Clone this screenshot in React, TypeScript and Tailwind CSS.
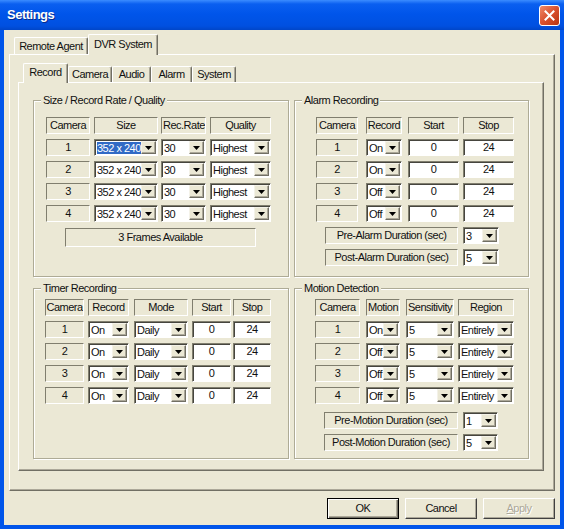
import type { ReactNode } from 'react'

const SUNKEN = 'border border-t-[#807e6e] border-l-[#807e6e] border-b-white border-r-white'

/**
 * Static text box with a sunken edge (column headers, camera numbers)
 */
function Static({ w, children }: { w: string; children: ReactNode }) {
  return (
    <div className={`${w} h-[17px] shrink-0 flex items-center justify-center overflow-hidden whitespace-nowrap leading-[15px] ${SUNKEN}`}>
      {children}
    </div>
  )
}

function DropArrow() {
  return (
    <div className="w-[15px] h-[13px] my-px mr-px shrink-0 flex items-center justify-center bg-[#ebe8d5] border border-t-[#f4f2e8] border-l-[#f4f2e8] border-b-[#716f64] border-r-[#716f64] shadow-[inset_-1px_-1px_0_#aca899]">
      <svg width="7" height="4" viewBox="0 0 7 4">
        <polygon points="0,0 7,0 3.5,4" fill="#000" />
      </svg>
    </div>
  )
}

/**
 * Drop down list with a white field and the arrow button
 */
function Combo({ w, value, selected }: { w: string; value: string; selected?: boolean }) {
  return (
    <div className={`${w} h-[17px] shrink-0 flex bg-white ${SUNKEN} shadow-[inset_1px_1px_0_#46453e]`}>
      <div className="flex-1 min-w-0 overflow-hidden whitespace-nowrap pl-[2px] pt-px leading-[14px]">
        <span className={selected ? 'bg-[#316ac5] text-white' : ''}>{value}</span>
      </div>
      <DropArrow />
    </div>
  )
}

function Edit({ w, value }: { w: string; value: string }) {
  return (
    <div className={`${w} h-[17px] shrink-0 flex items-center justify-center bg-white leading-[15px] ${SUNKEN} shadow-[inset_1px_1px_0_#46453e]`}>
      {value}
    </div>
  )
}

/**
 * Etched group box with its caption sitting on the top line
 */
function Group({ title, className, children }: { title: string; className: string; children: ReactNode }) {
  return (
    <div className={`relative border border-[#aeab96] shadow-[inset_1px_1px_0_#fff,1px_1px_0_#fff] ${className}`}>
      <span className="absolute -top-[8px] left-[7px] px-[2px] bg-[#ebe8d5] leading-[15px] whitespace-nowrap">{title}</span>
      {children}
    </div>
  )
}

function Tab({ label, w, active }: { label: string; w: string; active?: boolean }) {
  return (
    <div
      className={`${w} shrink-0 flex items-center justify-center rounded-t-[2px] border-t border-l border-t-white border-l-white border-r border-r-[#716f64] shadow-[inset_-1px_0_0_#aca899] bg-[#ebe8d5] whitespace-nowrap ${
        active ? 'relative z-10 -mb-px pb-[2px]' : ''
      }`}
    >
      {label}
    </div>
  )
}

const cams = ['1', '2', '3', '4']
const onOff = ['On', 'On', 'Off', 'Off']
const motion = ['On', 'Off', 'Off', 'Off']

export default function App() {
  return (
    <div className="w-[564px] h-[529px] flex flex-col overflow-hidden bg-[#0055ea] text-[11px] tracking-[-0.5px] text-[#111] font-['Liberation_Sans',Arial,sans-serif]">
      {/* Title bar */}
      <div className="h-[30px] shrink-0 flex items-center justify-between pl-[7px] pr-[4px] bg-[linear-gradient(#3b8cff_0px,#0a5ff0_4px,#0055ea_14px,#0050e0_26px,#0046c8_30px)]">
        <span className="text-white font-bold text-[13px] [text-shadow:1px_1px_0_#0a2a8a]">Settings</span>
        <div className="w-[21px] h-[21px] flex items-center justify-center rounded-[3px] border border-white bg-[linear-gradient(135deg,#f08a6a,#d8502e_50%,#b83410)]">
          <svg width="11" height="11" viewBox="0 0 11 11">
            <path d="M1.5 1.5 L9.5 9.5 M9.5 1.5 L1.5 9.5" stroke="#fff" strokeWidth="2" strokeLinecap="square" />
          </svg>
        </div>
      </div>

      {/* Window body */}
      <div className="flex-1 mx-[4px] mb-[4px] bg-[#ebe8d5] px-[5px] pt-[4px] flex flex-col">
        {/* Outer tabs */}
        <div className="h-[20px] pl-[5px] flex items-end">
          <Tab label="Remote Agent" w="w-[74px] h-[17px]" />
          <Tab label="DVR System" w="w-[70px] h-[21px]" active />
        </div>

        <div className="h-[437px] border border-t-white border-l-white border-b-[#716f64] border-r-[#716f64] shadow-[inset_-1px_-1px_0_#aca899] pl-[8px] pt-[8px]">
          {/* Inner tabs */}
          <div className="h-[19px] pl-[5px] flex items-end">
            <Tab label="Record" w="w-[45px] h-[20px]" active />
            <Tab label="Camera" w="w-[44px] h-[16px]" />
            <Tab label="Audio" w="w-[39px] h-[16px]" />
            <Tab label="Alarm" w="w-[41px] h-[16px]" />
            <Tab label="System" w="w-[44px] h-[16px]" />
          </div>

          <div className="w-[526px] h-[389px] border border-t-white border-l-white border-b-[#716f64] border-r-[#716f64] shadow-[inset_-1px_-1px_0_#aca899] pl-[14px] pt-[17px] flex flex-col gap-[11px]">
            <div className="flex gap-[5px]">
              {/* Size / Record Rate / Quality */}
              <Group title="Size / Record Rate / Quality" className="w-[256px] h-[177px] pl-[12px] pt-[16px] flex flex-col gap-[5px]">
                <div className="flex">
                  <Static w="w-[44px] mr-[4px]">Camera</Static>
                  <Static w="w-[64px] mr-[3px]">Size</Static>
                  <Static w="w-[45px] mr-[4px] !justify-start pl-px">Rec.Rate</Static>
                  <Static w="w-[61px]">Quality</Static>
                </div>
                {cams.map((c, i) => (
                  <div key={c} className="flex">
                    <Static w="w-[44px] mr-[4px]">{c}</Static>
                    <Combo w="w-[64px] mr-[3px]" value="352 x 240" selected={i === 0} />
                    <Combo w="w-[45px] mr-[4px]" value="30" />
                    <Combo w="w-[61px]" value="Highest" />
                  </div>
                ))}
                <div className="pl-[19px] pt-px">
                  <Static w="w-[191px] !h-[19px]">3 Frames Available</Static>
                </div>
              </Group>

              {/* Alarm Recording */}
              <Group title="Alarm Recording" className="w-[235px] h-[177px] pl-[21px] pt-[16px] flex flex-col gap-[5px]">
                <div className="flex">
                  <Static w="w-[42px] mr-[8px]">Camera</Static>
                  <Static w="w-[36px] mr-[6px]">Record</Static>
                  <Static w="w-[51px] mr-[4px]">Start</Static>
                  <Static w="w-[51px]">Stop</Static>
                </div>
                {cams.map((c, i) => (
                  <div key={c} className="flex">
                    <Static w="w-[42px] mr-[8px]">{c}</Static>
                    <Combo w="w-[36px] mr-[6px]" value={onOff[i]} />
                    <Edit w="w-[51px] mr-[4px]" value="0" />
                    <Edit w="w-[51px]" value="24" />
                  </div>
                ))}
                <div className="flex pl-[9px]">
                  <Static w="w-[133px] mr-[5px]">Pre-Alarm Duration (sec)</Static>
                  <Combo w="w-[36px]" value="3" />
                </div>
                <div className="flex pl-[9px]">
                  <Static w="w-[133px] mr-[5px]">Post-Alarm Duration (sec)</Static>
                  <Combo w="w-[36px]" value="5" />
                </div>
              </Group>
            </div>

            <div className="flex gap-[5px]">
              {/* Timer Recording */}
              <Group title="Timer Recording" className="w-[256px] h-[171px] pl-[11px] pt-[10px] flex flex-col gap-[5px]">
                <div className="flex">
                  <Static w="w-[39px] mr-[4px]">Camera</Static>
                  <Static w="w-[41px] mr-[5px]">Record</Static>
                  <Static w="w-[54px] mr-[4px]">Mode</Static>
                  <Static w="w-[39px] mr-[2px]">Start</Static>
                  <Static w="w-[38px]">Stop</Static>
                </div>
                {cams.map((c) => (
                  <div key={c} className="flex">
                    <Static w="w-[39px] mr-[4px]">{c}</Static>
                    <Combo w="w-[41px] mr-[5px]" value="On" />
                    <Combo w="w-[54px] mr-[4px]" value="Daily" />
                    <Edit w="w-[39px] mr-[2px]" value="0" />
                    <Edit w="w-[38px]" value="24" />
                  </div>
                ))}
              </Group>

              {/* Motion Detection */}
              <Group title="Motion Detection" className="w-[235px] h-[171px] pl-[20px] pt-[10px] flex flex-col gap-[5px]">
                <div className="flex">
                  <Static w="w-[45px] mr-[6px]">Camera</Static>
                  <Static w="w-[34px] mr-[6px]">Motion</Static>
                  <Static w="w-[48px] mr-[4px]">Sensitivity</Static>
                  <Static w="w-[56px]">Region</Static>
                </div>
                {cams.map((c, i) => (
                  <div key={c} className="flex">
                    <Static w="w-[45px] mr-[6px]">{c}</Static>
                    <Combo w="w-[34px] mr-[6px]" value={motion[i]} />
                    <Combo w="w-[48px] mr-[4px]" value="5" />
                    <Combo w="w-[56px]" value="Entirely" />
                  </div>
                ))}
                <div className="flex pl-[9px] pt-[3px]">
                  <Static w="w-[134px] mr-[5px]">Pre-Motion Duration (sec)</Static>
                  <Combo w="w-[35px]" value="1" />
                </div>
                <div className="flex pl-[9px]">
                  <Static w="w-[134px] mr-[5px]">Post-Motion Duration (sec)</Static>
                  <Combo w="w-[35px]" value="5" />
                </div>
              </Group>
            </div>
          </div>
        </div>

        {/* Dialog buttons */}
        <div className="mt-[7px] flex justify-end gap-[6px]">
          <button className="w-[72px] h-[21px] flex items-center justify-center bg-[#ebe8d5] border border-black shadow-[inset_1px_1px_0_#fff,inset_-1px_-1px_0_#716f64,inset_-2px_-2px_0_#aca899]">
            OK
          </button>
          <button className="w-[72px] h-[21px] flex items-center justify-center bg-[#ebe8d5] border border-t-white border-l-white border-b-[#404040] border-r-[#404040] shadow-[inset_-1px_-1px_0_#aca899]">
            Cancel
          </button>
          <button className="w-[72px] h-[21px] flex items-center justify-center bg-[#ebe8d5] border border-t-white border-l-white border-b-[#404040] border-r-[#404040] shadow-[inset_-1px_-1px_0_#aca899] text-[#aca899] [text-shadow:1px_1px_0_#fff]">
            <span className="underline">A</span>pply
          </button>
        </div>
      </div>
    </div>
  )
}
